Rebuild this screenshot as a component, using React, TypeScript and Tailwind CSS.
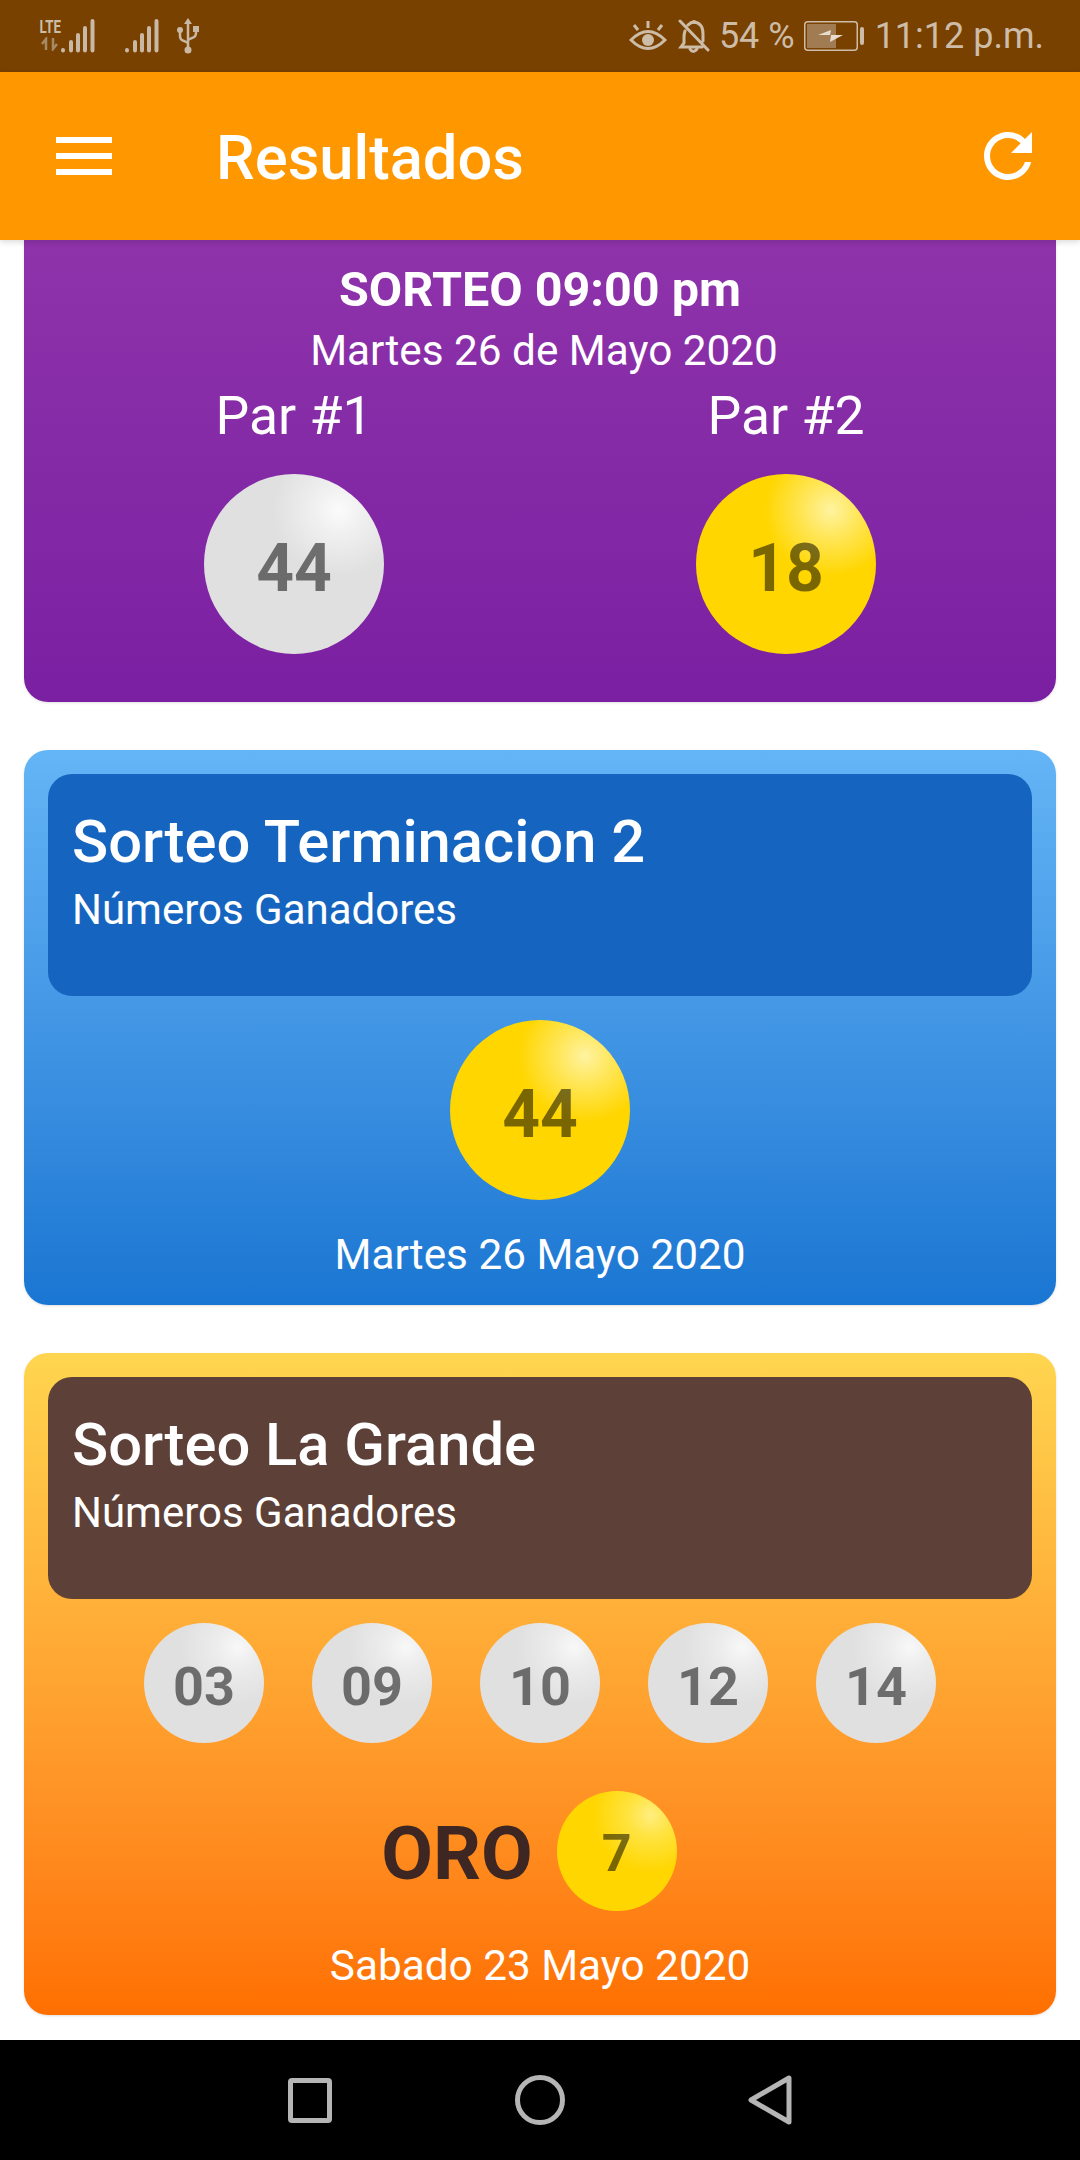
import React from "react";

const ballStyles = {
  silverLg: "h-[180px] w-[180px] pt-[9px] text-[66px] bg-[radial-gradient(circle_at_75%_20%,#fbfbfb_0px,#f0f0f0_24px,#e0e0e0_66px)]",
  goldLg: "h-[180px] w-[180px] pt-[9px] text-[66px] bg-[radial-gradient(circle_at_75%_20%,#fff3a0_0px,#ffe658_28px,#ffd600_66px)]",
  silverSm: "h-[120px] w-[120px] pt-[6px] text-[54px] bg-[radial-gradient(circle_at_78%_20%,#f8f8f8_0px,#ececec_22px,#e0e0e0_58px)]",
  goldSm: "h-[120px] w-[120px] pt-[6px] text-[52px] bg-[radial-gradient(circle_at_78%_20%,#ffee80_0px,#ffe340_22px,#ffd600_58px)]",
};

function Ball({ n, kind }: { n: string; kind: keyof typeof ballStyles }) {
  return (
    <div className={`flex shrink-0 items-center justify-center rounded-full font-bold text-black/52 ${ballStyles[kind]}`}>
      {n}
    </div>
  );
}

function SignalBars() {
  return (
    <svg width="36" height="34" viewBox="0 0 36 34" fill="none" stroke="#c9b8a3" strokeWidth="4" strokeLinecap="round">
      <path d="M3 31v0.5M11 23v8.5M18 16v15.5M25 9v22.5M32.500 2v29.500" />
    </svg>
  );
}

function StatusBar() {
  return (
    <div className="flex h-[72px] shrink-0 items-center bg-[#784100] pl-[40px] pr-[36px] text-[36px] leading-none text-[#cdbca8]">
      <div className="flex h-[34px] w-[20px] flex-col items-center">
        <span className="scale-x-[0.7] text-[19px] font-bold leading-[16px]">LTE</span>
        <svg className="mt-[2px]" width="20" height="14" viewBox="0 0 20 14" fill="none" stroke="#a58a68" strokeWidth="2.500">
          <path d="M6 13V2L2 7M13 1v11l4-5" />
        </svg>
      </div>
      <SignalBars />
      <div className="ml-[28px]">
        <SignalBars />
      </div>
      <svg className="ml-[16px]" width="24" height="36" viewBox="0 0 24 36" fill="none" stroke="#c9b8a3" strokeWidth="2.500">
        <path d="M12 4v28M4 13v5q0 4 4 5l4 2M20 12v3q0 4-4 5l-4 2" />
        <path d="M12 0l4 6H8z" fill="#c9b8a3" stroke="none" />
        <circle cx="12" cy="32" r="3.500" fill="#c9b8a3" stroke="none" />
        <circle cx="4" cy="12" r="3" fill="#c9b8a3" stroke="none" />
        <rect x="17" y="8" width="6" height="6" fill="#c9b8a3" stroke="none" />
      </svg>
      <div className="ml-auto flex items-center">
        <svg width="38" height="32" viewBox="0 0 38 32" fill="none" stroke="#cdbca8" strokeWidth="3">
          <path d="M2 20q17-17 34 0q-17 17-34 0z" />
          <circle cx="19" cy="20" r="6" fill="#cdbca8" stroke="none" />
          <path d="M19 8V1M9 10L5 5M29 10l4-5" />
        </svg>
        <svg className="ml-[11px]" width="32" height="34" viewBox="0 0 32 34" fill="none" stroke="#cdbca8" strokeWidth="3" strokeLinecap="round">
          <path d="M2 2l28 29M7 12q-1 3-1 6v6l-3 4h21M10 6q3-3 6-3q9 1 9 12v7" />
          <path d="M12 30q3 5 7 0" />
          <circle cx="16" cy="3" r="2" fill="#cdbca8" stroke="none" />
        </svg>
        <span className="ml-[9px]">54 %</span>
        <svg className="ml-[9px]" width="60" height="30" viewBox="0 0 60 30" fill="none">
          <rect x="0.750" y="0.750" width="52.500" height="28.500" rx="3" stroke="#cdbca8" strokeWidth="1.500" />
          <rect x="3" y="3" width="29" height="24" fill="#a17c52" />
          <path d="M14 14l13-5-1 5h13l-13 7 1-7z" fill="#e6dccf" />
          <rect x="56" y="6" width="4" height="18" rx="2" fill="#cdbca8" />
        </svg>
        <span className="ml-[11px]">11:12 p.m.</span>
      </div>
    </div>
  );
}

function AppBar() {
  return (
    <div className="relative z-10 flex h-[168px] shrink-0 items-center bg-[#ff9800] pl-[56px] pr-[36px] shadow-[0_2px_6px_rgba(0,0,0,0.15)]">
      <div className="flex w-[56px] flex-col gap-[10px]">
        <div className="h-[6px] bg-white" />
        <div className="h-[6px] bg-white" />
        <div className="h-[6px] bg-white" />
      </div>
      <div className="ml-[104px] pt-[4px] text-[61.500px] font-medium text-white">Resultados</div>
      <svg className="ml-auto" width="72" height="72" viewBox="0 0 24 24" fill="#fff">
        <path d="M17.650 6.350C16.200 4.900 14.210 4 12 4c-4.420 0-7.990 3.580-7.990 8s3.570 8 7.990 8c3.730 0 6.840-2.550 7.730-6h-2.080c-.82 2.330-3.040 4-5.650 4-3.310 0-6-2.690-6-6s2.690-6 6-6c1.660 0 3.140.69 4.220 1.780L13 11h7V4l-2.350 2.350z" />
      </svg>
    </div>
  );
}

function CardHeader({ title, bg }: { title: string; bg: string }) {
  return (
    <div className={`h-[222px] rounded-[24px] px-[24px] pt-[33px] text-white ${bg}`}>
      <div className="text-[59.700px] font-medium leading-[70px]">{title}</div>
      <div className="mt-[7px] text-[42px] leading-[52px]">Números Ganadores</div>
    </div>
  );
}

export default function App() {
  return (
    <div className="flex h-[2160px] w-[1080px] flex-col overflow-hidden bg-white font-['Roboto',sans-serif]">
      <StatusBar />
      <AppBar />

      <div className="flex flex-1 flex-col gap-[48px] overflow-hidden px-[24px]">
        {/* Pares, scrolled under the app bar */}
        <div className="h-[462px] rounded-b-[24px] bg-gradient-to-b from-[#8e33aa] to-[#7b1fa2] px-[24px] pt-[24px] text-center text-white shadow-sm">
          <div className="text-[48.500px] font-bold leading-[52px]">SORTEO 09:00 pm</div>
          <div className="mt-[11px] pl-[8px] text-[42.300px] leading-[48px]">Martes 26 de Mayo 2020</div>
          <div className="mt-[11px] grid grid-cols-2">
            <div className="flex flex-col items-center">
              <div className="text-[53.500px] leading-[60px]">Par #1</div>
              <div className="mt-[28px]">
                <Ball n="44" kind="silverLg" />
              </div>
            </div>
            <div className="flex flex-col items-center">
              <div className="text-[53.500px] leading-[60px]">Par #2</div>
              <div className="mt-[28px]">
                <Ball n="18" kind="goldLg" />
              </div>
            </div>
          </div>
        </div>

        {/* Terminacion */}
        <div className="flex h-[555px] shrink-0 flex-col items-center rounded-[24px] bg-gradient-to-b from-[#64b5f6] to-[#1976d2] p-[24px] text-white shadow-sm">
          <div className="w-full">
            <CardHeader title="Sorteo Terminacion 2" bg="bg-[#1565c0]" />
          </div>
          <div className="mt-[24px]">
            <Ball n="44" kind="goldLg" />
          </div>
          <div className="mt-[31px] text-[42.300px] leading-[48px]">Martes 26 Mayo 2020</div>
        </div>

        {/* La Grande */}
        <div className="flex h-[662px] shrink-0 flex-col items-center rounded-[24px] bg-gradient-to-b from-[#ffd54f] to-[#ff6f00] p-[24px] text-white shadow-sm">
          <div className="w-full">
            <CardHeader title="Sorteo La Grande" bg="bg-[#5d4037]" />
          </div>
          <div className="mt-[24px] flex gap-[48px]">
            {["03", "09", "10", "12", "14"].map((n) => (
              <Ball key={n} n={n} kind="silverSm" />
            ))}
          </div>
          <div className="mt-[48px] flex items-center gap-[24px] pr-[22px]">
            <span className="pt-[4px] text-[75px] font-bold leading-none text-[#3e2723]">ORO</span>
            <Ball n="7" kind="goldSm" />
          </div>
          <div className="mt-[31px] text-[42.300px] leading-[48px]">Sabado 23 Mayo 2020</div>
        </div>
      </div>

      {/* Nav bar */}
      <div className="flex h-[120px] shrink-0 items-center justify-center gap-[183px] bg-black">
        <div className="h-[45px] w-[44px] rounded-[4px] border-[5px] border-[#b5b5b5]" />
        <div className="h-[50px] w-[50px] rounded-full border-[5px] border-[#b5b5b5]" />
        <svg width="44" height="50" viewBox="0 0 44 50" fill="none" stroke="#b5b5b5" strokeWidth="5" strokeLinejoin="round">
          <path d="M41 3v44L3 25z" />
        </svg>
      </div>
    </div>
  );
}
